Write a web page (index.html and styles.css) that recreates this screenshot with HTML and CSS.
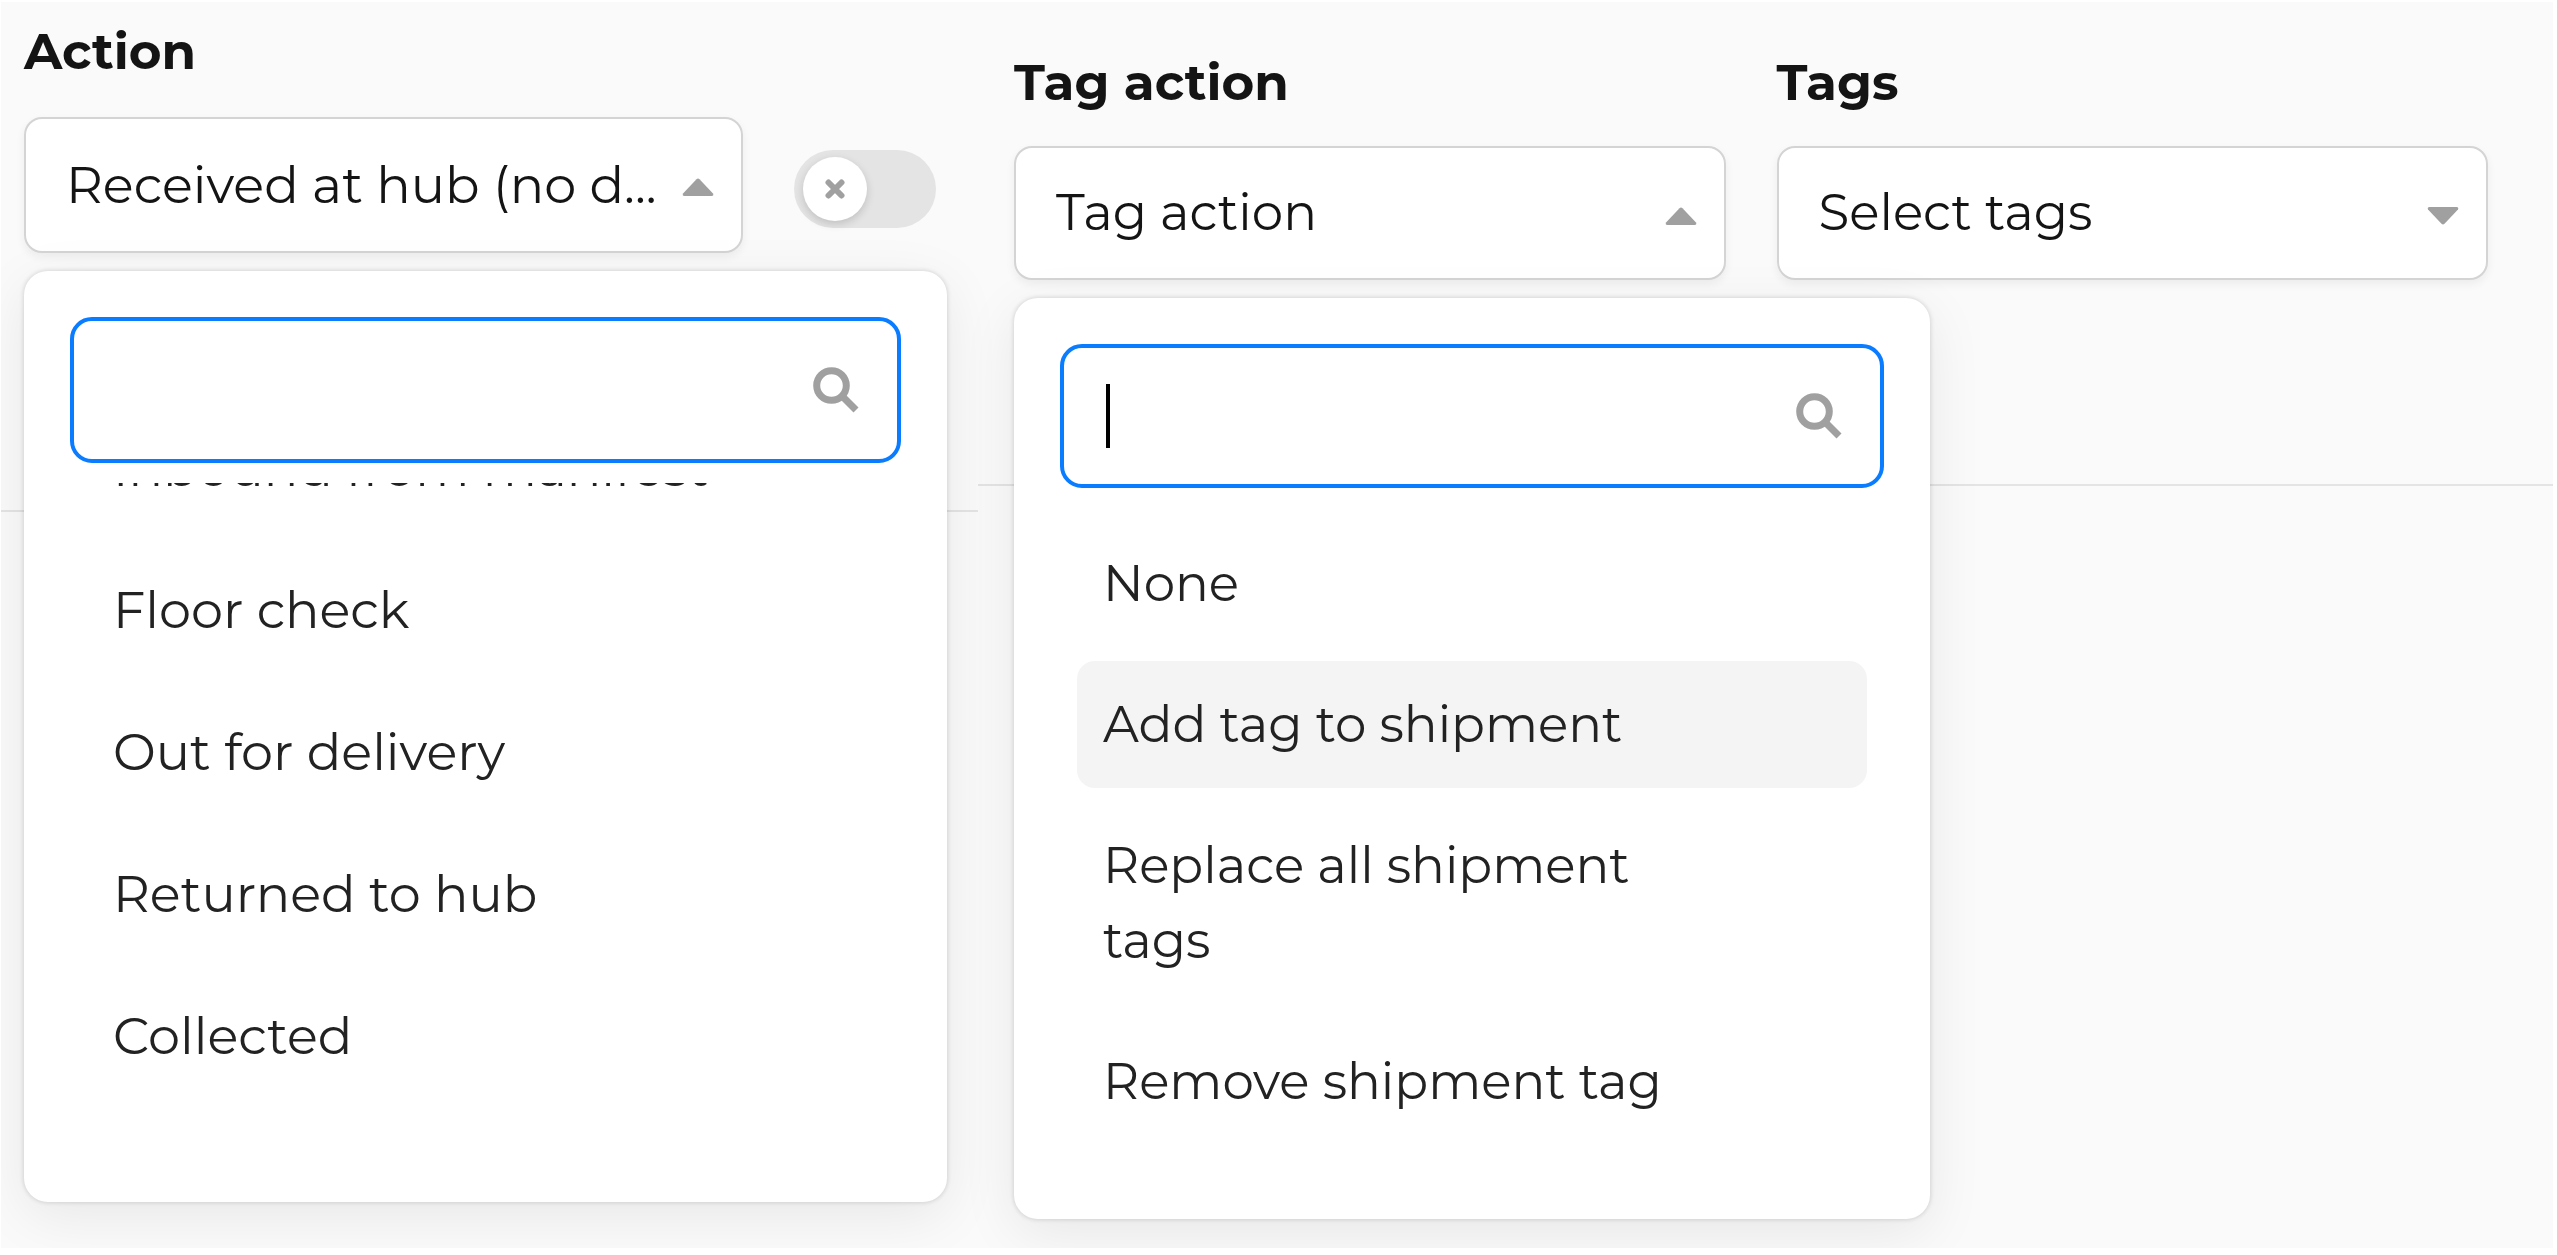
FILE: index.html
```html
<!DOCTYPE html>
<html lang="en">
<head>
<meta charset="utf-8">
<meta name="viewport" content="width=device-width, initial-scale=1">
<title>Scan actions</title>
<link rel="stylesheet" href="styles.css">
</head>
<body>
<main class="board">
  <section class="panel panel-status">
    <div class="toolbar">
      <div class="field">
        <label class="field-label" for="action">Action</label>
        <div class="picker">
          <select class="picker-select" id="action"><option>Received at hub (no d...</option></select>
          <svg class="caret" viewBox="0 0 32 18" aria-hidden="true"><path d="M14.500 1.200Q16 0 17.500 1.200L31 15.500Q32 18 29.500 18H2.500Q0 18 1 15.500Z"/></svg>
          <div class="menu">
            <label class="search">
              <input class="search-input" type="text" aria-label="Search actions">
              <svg class="search-icon" viewBox="0 0 46 46" aria-hidden="true"><circle cx="18.500" cy="18.500" r="14.800"/><path d="M29.500 29.500L43 43"/></svg>
            </label>
            <ul class="options options-scrolled" role="listbox" aria-label="Action">
              <li class="option" role="option">Inbound from manifest</li>
              <li class="option" role="option">Floor check</li>
              <li class="option" role="option">Out for delivery</li>
              <li class="option" role="option">Returned to hub</li>
              <li class="option" role="option">Collected</li>
            </ul>
          </div>
        </div>
      </div>
      <label class="toggle">
        <input class="toggle-input" type="checkbox" aria-label="Enable action">
        <span class="toggle-knob"><svg class="toggle-icon" viewBox="0 0 20 20" aria-hidden="true"><path d="M3.500 3.500L16.500 16.500M16.500 3.500L3.500 16.500"/></svg></span>
      </label>
    </div>
  </section>
  <section class="panel panel-tags">
    <div class="toolbar">
      <div class="field">
        <label class="field-label" for="tag-action">Tag action</label>
        <div class="picker">
          <select class="picker-select" id="tag-action"><option>Tag action</option></select>
          <svg class="caret" viewBox="0 0 32 18" aria-hidden="true"><path d="M14.500 1.200Q16 0 17.500 1.200L31 15.500Q32 18 29.500 18H2.500Q0 18 1 15.500Z"/></svg>
          <div class="menu">
            <label class="search">
              <span class="text-cursor"></span>
              <input class="search-input" type="text" aria-label="Search tag actions">
              <svg class="search-icon" viewBox="0 0 46 46" aria-hidden="true"><circle cx="18.500" cy="18.500" r="14.800"/><path d="M29.500 29.500L43 43"/></svg>
            </label>
            <ul class="options" role="listbox" aria-label="Tag action">
              <li class="option" role="option">None</li>
              <li class="option option-active" role="option">Add tag to shipment</li>
              <li class="option" role="option">Replace all shipment tags</li>
              <li class="option" role="option">Remove shipment tag</li>
            </ul>
          </div>
        </div>
      </div>
      <div class="field">
        <label class="field-label" for="tags">Tags</label>
        <div class="picker">
          <select class="picker-select" id="tags"><option>Select tags</option></select>
          <svg class="caret" viewBox="0 0 32 18" aria-hidden="true"><path d="M14.500 16.800Q16 18 17.500 16.800L31 2.500Q32 0 29.500 0H2.500Q0 0 1 2.500Z"/></svg>
        </div>
      </div>
    </div>
  </section>
</main>
</body>
</html>
```
FILE: styles.css
```css
* {
  box-sizing: border-box;
}

body {
  margin: 0;
  min-height: 100vh;
  display: flex;
  padding: 2px 4px 7px 1px;
  background: #fff;
  color: #141414;
  font: 50px/76px Montserrat, Inter, "Open Sans", sans-serif;
}

.board {
  flex: 1;
  display: grid;
  grid-template-columns: 977fr 1575fr;
  background: #fafafa;
  overflow: hidden;
}

.toolbar {
  display: flex;
  gap: 51px;
  border-bottom: 2px solid #e4e4e4;
}

.panel-status .toolbar {
  height: 510px;
  padding: 12px 42px 0 23px;
}

.panel-tags .toolbar {
  height: 484px;
  padding: 43px 65px 0 36px;
}

.field {
  flex: 1;
  min-width: 0;
}

.field-label {
  display: block;
  font-weight: 700;
}

.picker {
  position: relative;
  margin-top: 25px;
}

.panel-status .picker {
  margin-top: 27px;
  font-size: 51px;
}

.picker-select {
  appearance: none;
  display: block;
  width: 100%;
  height: 134px;
  margin: 0;
  padding: 0 60px 0 40px;
  border: 2px solid #d4d4d4;
  border-radius: 18px;
  background: #fff;
  box-shadow: 0 4px 10px rgba(0, 0, 0, 0.06);
  color: #141414;
  font: inherit;
}

.panel-status .picker-select {
  height: 136px;
}

.caret {
  position: absolute;
  top: 61px;
  right: 29px;
  width: 32px;
  height: 18px;
  fill: #a0a0a0;
}

.menu {
  position: absolute;
  z-index: 1;
  top: calc(100% + 18px);
  left: 0;
  width: calc(100% + 204px);
  padding: 46px;
  border-radius: 24px;
  background: #fff;
  color: #222;
  box-shadow: 0 0 4px 1px rgba(0, 0, 0, 0.12), 0 14px 56px rgba(0, 0, 0, 0.08);
}

.search {
  display: flex;
  align-items: center;
  height: 144px;
  padding: 0 38px;
  border: 4px solid #0a7cff;
  border-radius: 22px;
}

.panel-status .search {
  height: 146px;
}

.search-input {
  flex: 1;
  min-width: 0;
  padding: 0;
  border: 0;
  outline: 0;
  background: transparent;
  color: inherit;
  font: inherit;
}

.text-cursor {
  width: 4px;
  height: 64px;
  margin-left: 4px;
  background: #000;
}

.search-icon {
  width: 46px;
  height: 46px;
  fill: none;
  stroke: #a0a0a0;
  stroke-width: 7;
}

.options {
  display: flex;
  flex-direction: column;
  gap: 14px;
  margin: 32px 0 0;
  padding: 0 17px 28px;
  line-height: 75px;
  list-style: none;
}

.options-scrolled {
  justify-content: flex-end;
  height: 673px;
  margin-top: 20px;
  padding-bottom: 56px;
  line-height: 76px;
  overflow: hidden;
}

.option {
  flex: none;
  padding: 26px 120px 26px 26px;
  border-radius: 18px;
}

.options-scrolled .option {
  padding-right: 26px;
}

.option-active {
  background: #f4f4f4;
}

.toggle {
  position: relative;
  flex: none;
  width: 142px;
  height: 78px;
  margin-top: 136px;
  padding: 7px 9px;
  border-radius: 39px;
  background: #e4e4e4;
}

.toggle-input {
  position: absolute;
  inset: 0;
  width: 100%;
  height: 100%;
  margin: 0;
  opacity: 0;
}

.toggle-knob {
  display: flex;
  align-items: center;
  justify-content: center;
  width: 64px;
  height: 64px;
  border-radius: 50%;
  background: #fff;
  box-shadow: 0 3px 8px rgba(0, 0, 0, 0.16);
}

.toggle-icon {
  width: 20px;
  height: 20px;
  stroke: #a0a0a0;
  stroke-width: 6;
  stroke-linecap: round;
}
```
